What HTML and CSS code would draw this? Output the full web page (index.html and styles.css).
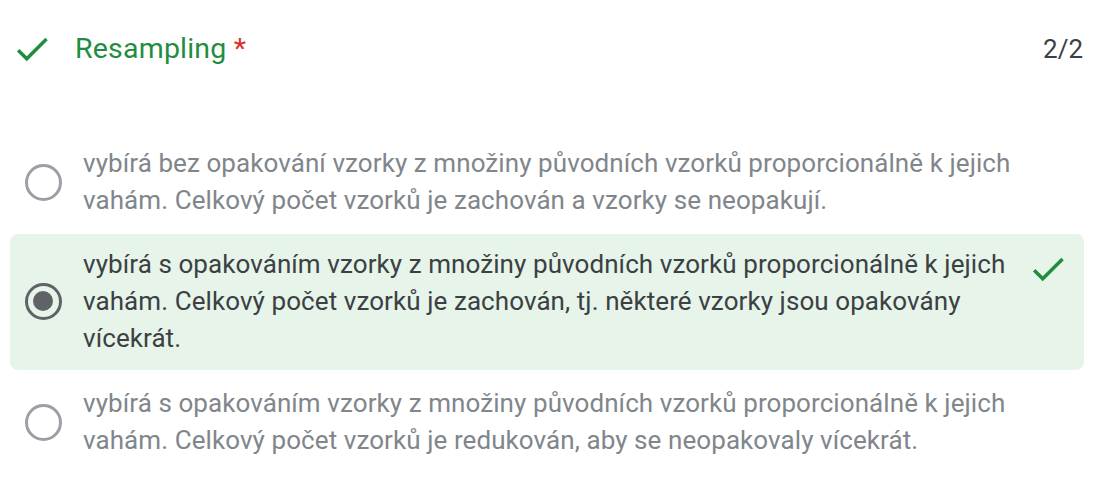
FILE: index.html
```html
<!DOCTYPE html>
<html lang="cs">
<head>
<meta charset="utf-8">
<link rel="stylesheet" href="styles.css">
</head>
<body>
<div class="card">
  <div class="header">
    <svg class="hcheck" viewBox="0 0 24 24" width="42" height="42"><path d="M9 16.2L4.8 12l-1.4 1.4L9 19 21 7l-1.4-1.4L9 16.2z" fill="#1e8e3e"/></svg>
    <div class="title">Resampling <span class="req">*</span></div>
    <div class="score">2/2</div>
  </div>
  <div class="options">
    <div class="opt">
      <div class="radio"></div>
      <div class="text">vybírá bez opakování vzorky z množiny původních vzorků proporcionálně k jejich vahám. Celkový počet vzorků je zachován a vzorky se neopakují.</div>
    </div>
    <div class="opt selected">
      <div class="radio checked"></div>
      <div class="text">vybírá s opakováním vzorky z množiny původních vzorků proporcionálně k jejich vahám. Celkový počet vzorků je zachován, tj. některé vzorky jsou opakovány vícekrát.</div>
      <svg class="ocheck" viewBox="0 0 24 24" width="42" height="42"><path d="M9 16.2L4.8 12l-1.4 1.4L9 19 21 7l-1.4-1.4L9 16.2z" fill="#1e8e3e"/></svg>
    </div>
    <div class="opt">
      <div class="radio"></div>
      <div class="text">vybírá s opakováním vzorky z množiny původních vzorků proporcionálně k jejich vahám. Celkový počet vzorků je redukován, aby se neopakovaly vícekrát.</div>
    </div>
  </div>
</div>
</body>
</html>
```
FILE: styles.css
```css
html, body { margin: 0; padding: 0; background: #fff; }
body { font-family: Roboto, "Liberation Sans", sans-serif; width: 1107px; height: 492px; overflow: hidden; }
.card { padding: 0 23px 0 10px; }
.header { display: flex; align-items: center; height: 97px; padding-left: 1px; }
.hcheck { flex: none; }
.title { flex: 1; margin-left: 22px; font-size: 28.5px; color: #1e8e3e; letter-spacing: 0.2px; }
.req { color: #d93025; }
.score { font-size: 26px; color: #3c4043; margin-right: 1px; }
.options { display: flex; flex-direction: column; gap: 3px; margin-top: 36px; }
.opt { display: flex; align-items: center; padding: 12px 0 12px 15px; border-radius: 8px; }
.opt.selected { background: #e6f4ea; padding-bottom: 13px; }
.radio { flex: none; width: 37px; height: 37px; border: 3.7px solid #9aa0a6; border-radius: 50%; box-sizing: border-box; margin-right: 21px; position: relative; }
.radio.checked { border-color: #5f6368; }
.radio.checked::after { content: ""; position: absolute; left: 4.8px; top: 4.8px; width: 20px; height: 20px; border-radius: 50%; background: #5f6368; }
.text { flex: none; width: 940px; font-size: 26px; letter-spacing: 0.08px; line-height: 37px; color: #80868b; }
.selected .text { color: #3c4043; }
.ocheck { flex: none; align-self: flex-start; margin: 2px 0 0 4px; }
```
